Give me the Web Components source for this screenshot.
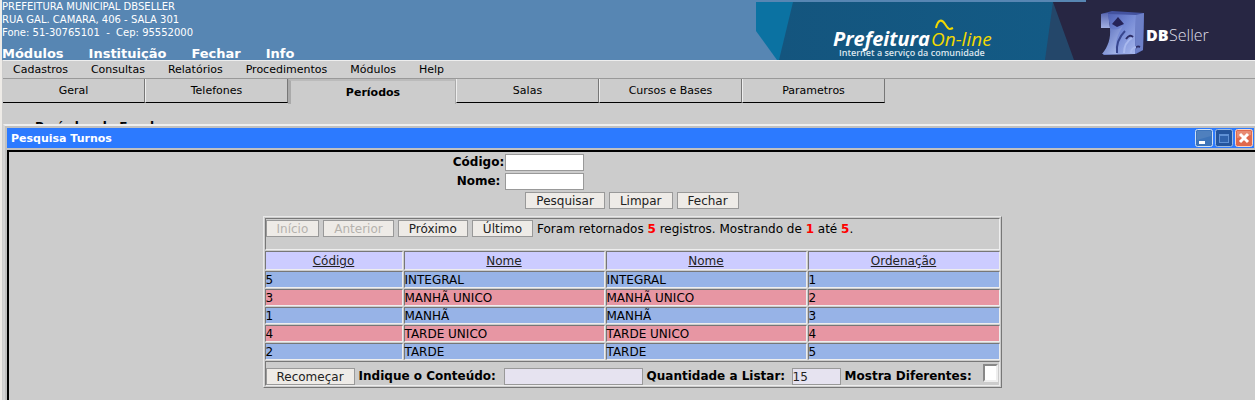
<!DOCTYPE html>
<html lang="pt-BR">
<head>
<meta charset="utf-8">
<title>Pesquisa Turnos</title>
<style>
html, body { margin: 0; }
body { background: #ccc; color: #000; font: 12px/15px "DejaVu Sans", Verdana, sans-serif; }
</style>
</head>
<body>
<school-app>
  <app-banner slot="banner"></app-banner>
  <menu-bar items="Cadastros,Consultas,Relatórios,Procedimentos,Módulos,Help"></menu-bar>
  <tab-strip items="Geral,Telefones,Períodos,Salas,Cursos e Bases,Parametros" active="Períodos"></tab-strip>
  <panel-heading>Períodos da Escola</panel-heading>
  <inner-window caption="Pesquisa Turnos">
    <search-form></search-form>
    <result-grid></result-grid>
  </inner-window>
</school-app>
<script>
function define(name, render) {
  customElements.define(name, class extends HTMLElement {
    constructor() { super(); this.attachShadow({ mode: 'open' }); }
    connectedCallback() {
      this.shadowRoot.innerHTML = '<style>*{box-sizing:border-box}:host{display:block}</style>' + render(this);
    }
  });
}
const list = el => el.getAttribute('items').split(',');

const controls = `
  button { height: 17px; padding: 0 10px; border: 1px solid #999; background: #eeebe7; color: #222; font: inherit; line-height: 17px; white-space: nowrap; }
  button:disabled { color: #b5b2ad; }
  input { height: 17px; margin: 0; padding: 0; border: 1px solid #999; border-radius: 0; background: #fff; font: inherit; color: #222; }
  label { font-weight: bold; line-height: 17px; white-space: nowrap; }`;

define('school-app', () => `
<style>
  :host { display: flex; flex-direction: column; min-height: 100vh; border-left: 2px solid #eeebe7; }
  main { flex: 1; display: flex; flex-direction: column; padding-left: 1px; }
</style>
<slot name="banner"></slot><main><slot></slot></main>`);

define('app-banner', () => `
<style>
  :host { display: flex; justify-content: space-between; height: 60px; background: #5786b3; color: #fff; overflow: hidden; }
  .info { display: flex; flex-direction: column; justify-content: space-between; }
  address { font-style: normal; font-size: 10px; line-height: 13px; white-space: pre; }
  nav { display: flex; gap: 25px; font-size: 13px; font-weight: bold; line-height: 13px; }
  a { color: inherit; text-decoration: none; }
  svg { display: block; flex: none; }
</style>
<div class="info">
  <address>PREFEITURA MUNICIPAL DBSELLER
RUA GAL. CAMARA, 406 - SALA 301
Fone: 51-30765101  -  Cep: 95552000</address>
  <nav><a href="#m">Módulos</a><a href="#i">Instituição</a><a href="#f">Fechar</a><a href="#n">Info</a></nav>
</div>
<svg width="499" height="60" viewBox="0 0 499 60" role="img" aria-label="Prefeitura On-line, DBSeller">
  <defs>
    <linearGradient id="face" x1="0" y1="0" x2="1" y2="1"><stop offset="0" stop-color="#4a5bb0"/><stop offset=".45" stop-color="#7186d2"/><stop offset="1" stop-color="#a9b9ee"/></linearGradient>
    <linearGradient id="side" x1="0" y1="0" x2="0" y2="1"><stop offset="0" stop-color="#5a68b0"/><stop offset="1" stop-color="#a2b0e4"/></linearGradient>
    <linearGradient id="foot" x1="0" y1="0" x2="1" y2="1"><stop offset="0" stop-color="#5468b8"/><stop offset="1" stop-color="#b6c6f4"/></linearGradient>
    <linearGradient id="sea" x1="0" y1="0" x2="1" y2="0"><stop offset="0" stop-color="#14557e"/><stop offset="1" stop-color="#135b86"/></linearGradient>
  </defs>
  <path fill="#0b72a2" d="M0 2H40V60H21L0 31Z"/>
  <path fill="url(#sea)" d="M37 2H330V60H23Z"/>
  <path fill="#24476a" d="M297 2H330V60H289Z"/>
  <path fill="#272643" d="M297 2H330V0H499V60H318Z"/>
  <text x="77" y="46" font-family="Open Sans" font-weight="700" font-style="italic" font-size="20" fill="#fff">Prefeitura</text>
  <text x="175" y="46" font-family="Open Sans" font-style="italic" font-size="19" fill="#f2d900">On-line</text>
  <path d="M180 28C182 19 186 19 189 24S193 30 197 28" fill="none" stroke="#f2d900" stroke-width="2"/>
  <text x="83" y="56" font-family="Open Sans" font-weight="600" font-size="9" fill="#dce6ee">Internet a serviço da comunidade</text>
  <path fill="#4453a0" d="M345 14L356 11L388 13L387 50L380 54L352 20Z"/>
  <path fill="url(#side)" d="M345 14L352 13L354 28L345 28Z"/>
  <path fill="url(#face)" d="M352 14L380 15L379 54L347 55C353 47 356 38 354 28Z"/>
  <path fill="#6d80c8" d="M380 15L388 13L387 50L379 54Z"/>
  <path fill="url(#foot)" d="M354 28C359 31 364 29 367 26C361 35 358 44 361 54L346 54C352 47 355 38 354 28Z"/>
  <path fill="#252358" d="M362 17L368 24L361 27L356 24Z"/>
  <path fill="none" stroke="#38468e" stroke-width="2" d="M361 53C360 43 364 36 369 31"/>
  <path fill="none" stroke="#2c2c64" stroke-width="2" d="M370 39C373 35 375 35 377 37M380 48C381 46 382 46 384 47"/>
  <path fill="none" stroke="#a9b9ee" stroke-width="2" d="M368 53C368 46 371 41 376 38M375 53C375 49 377 48 380 47"/>
  <text x="390" y="41" font-family="Open Sans" font-weight="800" font-size="16" fill="#fff">DB</text>
  <text x="413" y="41" font-family="Open Sans" font-weight="300" font-size="16" fill="#dfdfe8">Seller</text>
</svg>`);

define('menu-bar', el => `
<style>
  :host { background: #cfcfcf; border-top: 1px solid #eee; border-bottom: 1px solid #999; font-size: 11px; line-height: 17px; }
  nav { display: flex; gap: 23px; padding-left: 10px; }
  a { color: inherit; text-decoration: none; }
</style>
<nav>${list(el).map(t => `<a href="#">${t}</a>`).join('')}</nav>`);

define('tab-strip', el => `
<style>
  nav { display: flex; font-size: 11px; line-height: 23px; text-align: center; }
  a { width: 143px; height: 24px; border: solid; border-width: 0 1px 1px; border-color: #eee #777 #000 #eee; color: inherit; text-decoration: none; }
  a.on { width: 168px; height: 25px; border: solid; border-width: 2px 1px 0 3px; border-color: #bbb #aaa #bbb #aaa; font-weight: bold; }
  a:first-child { width: 142px; border-left: 0; }
</style>
<nav>${list(el).map(t => `<a href="#"${t === el.getAttribute('active') ? ' class="on" aria-current="page"' : ''}>${t}</a>`).join('')}</nav>`);

define('panel-heading', () => `
<style>
  :host { height: 20px; overflow: hidden; }
  h2 { margin: 0; padding: 15px 0 0 32px; font-size: 12px; line-height: 17px; }
</style>
<h2><slot></slot></h2>`);

define('inner-window', el => `
<style>
  :host { flex: 1; display: flex; flex-direction: column; background: #c0c0c0; border-top: 2px solid #eee; border-left: 2px solid #d4d4d4; padding: 2px 0 0 2px; }
  header { display: flex; justify-content: space-between; align-items: center; height: 20px; margin-right: 1px; padding: 0 1px 0 4px; background: #2c7aff; color: #fff; }
  h1 { margin: 0; font-size: 11px; }
  .controls { display: flex; gap: 2px; }
  button { width: 18px; height: 18px; padding: 0; border: 0; background: none; }
  svg { display: block; }
  .body { flex: 1; margin-top: 2px; padding-top: 2px; background: #ccc; border-top: 2px solid #000; border-left: 2px solid #000; }
</style>
<header>
  <h1>${el.getAttribute('caption')}</h1>
  <div class="controls">
    <button aria-label="Minimizar"><svg width="18" height="18"><rect x=".5" y=".5" width="17" height="17" rx="2" fill="#3e74b9" stroke="#cfe0f5"/><path fill="#4f80be" d="M2 2H16V7L2 11Z"/><rect x="4" y="12" width="6" height="3" fill="#fff"/></svg></button>
    <button aria-label="Maximizar"><svg width="18" height="18"><rect x=".5" y=".5" width="17" height="17" rx="2" fill="#25559d" stroke="#9dbbe2"/><rect x="4.5" y="5.5" width="9" height="8" fill="#2f62ad" stroke="#5f90d5"/><path stroke="#5f90d5" stroke-width="2" d="M4 6H14"/></svg></button>
    <button aria-label="Fechar"><svg width="18" height="18"><rect x=".5" y=".5" width="17" height="17" rx="2" fill="#df694d" stroke="#f6d5ca"/><path fill="#e88b73" d="M2 2H16V6L2 9Z"/><path stroke="#fff" stroke-width="3" d="M5 5L13 13M13 5L5 13"/></svg></button>
  </div>
</header>
<div class="body"><slot></slot></div>`);

define('search-form', () => `
<style>
  ${controls}
  form { display: grid; grid-template-columns: 53px 1fr; row-gap: 2px; width: 360px; max-width: 100%; margin: 0 auto; align-items: center; }
  label { text-align: center; }
  input { width: 79px; }
  .actions { grid-column: 1 / -1; display: flex; justify-content: center; gap: 4px; }
</style>
<form>
  <label for="code">Código:</label><input id="code">
  <label for="name">Nome:</label><input id="name">
  <div class="actions"><button type="button">Pesquisar</button><button type="button">Limpar</button><button type="button">Fechar</button></div>
</form>`);

const rows = [['5', 'INTEGRAL', '1'], ['3', 'MANHÃ UNICO', '2'], ['1', 'MANHÃ', '3'], ['4', 'TARDE UNICO', '4'], ['2', 'TARDE', '5']];
define('result-grid', () => `
<style>
  ${controls}
  :host { padding-top: 7px; }
  table { width: 739px; max-width: 100%; margin: 0 auto; table-layout: fixed; border: 1px solid; border-color: #e8e8e8 #777 #777 #e8e8e8; border-spacing: 1px; }
  .c1 { width: 138px; } .c2 { width: 201px; }
  th, td { padding: 0; border: 1px solid; border-color: #777 #eee #eee #777; text-align: left; white-space: nowrap; }
  th { height: 19px; padding-top: 2px; background: #ccf; font-weight: normal; text-align: center; }
  a { color: #222; }
  tbody tr { background: #97b3e7; }
  tbody tr:nth-child(even) { background: #e796a3; }
  tbody td { padding-top: 1px; line-height: 14px; }
  .bar { display: flex; gap: 4px; align-items: center; }
  .top { height: 30px; padding-bottom: 11px; }
  .message { line-height: 17px; padding-top: 2px; }
  .bottom { height: 23px; align-items: flex-end; }
  b { color: #f00; }
  .field { display: flex; align-items: flex-end; }
  .field label { min-width: 145px; }
  .field input { background: #e6e3f0; }
  #text { width: 139px; } #count { width: 49px; }
  .field #diff { appearance: none; width: 15px; height: 18px; margin: 0 0 3px; background: #fff; border: 2px solid; border-color: #888 #eee #eee #888; }
  .check { gap: 4px; }
  .check label { min-width: 134px; }
</style>
<table>
  <colgroup><col class="c1"><col class="c2"><col class="c2"><col></colgroup>
  <thead>
    <tr><td colspan="4"><div class="bar top"><button disabled>Início</button><button disabled>Anterior</button><button>Próximo</button><button>Último</button><span class="message">Foram retornados <b>5</b> registros. Mostrando de <b>1</b> até <b>5</b>.</span></div></td></tr>
    <tr>${['Código', 'Nome', 'Nome', 'Ordenação'].map(t => `<th scope="col"><a href="#">${t}</a></th>`).join('')}</tr>
  </thead>
  <tbody>${rows.map(([id, name, order]) => `<tr><td>${id}</td><td>${name}</td><td>${name}</td><td>${order}</td></tr>`).join('')}</tbody>
  <tfoot><tr><td colspan="4"><div class="bar bottom">
    <button>Recomeçar</button>
    <span class="field"><label for="text">Indique o Conteúdo:</label><input id="text"></span>
    <span class="field"><label for="count">Quantidade a Listar:</label><input id="count" value="15"></span>
    <span class="field check"><label for="diff">Mostra Diferentes:</label><input id="diff" type="checkbox"></span>
  </div></td></tr></tfoot>
</table>`);
</script>
</body>
</html>
